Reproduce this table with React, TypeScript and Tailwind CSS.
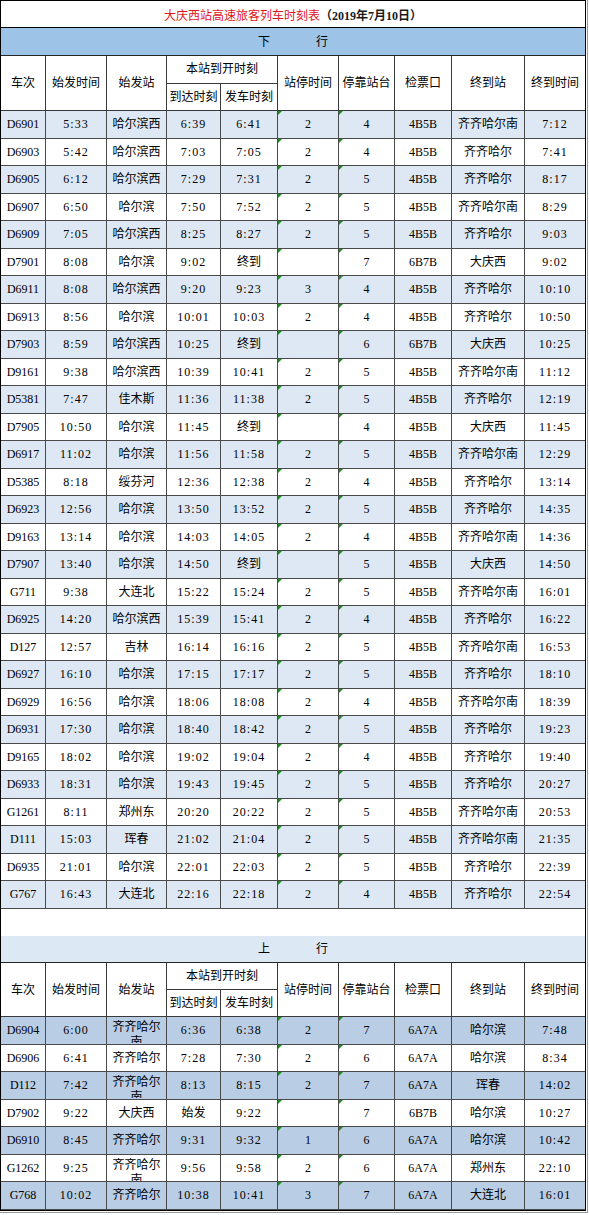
import React from "react";

type Row = string[];

// 下行
const downRows: Row[] = [
    ["D6901", "5:33", "哈尔滨西", "6:39", "6:41", "2", "4", "4B5B", "齐齐哈尔南", "7:12"],
    ["D6903", "5:42", "哈尔滨西", "7:03", "7:05", "2", "4", "4B5B", "齐齐哈尔", "7:41"],
    ["D6905", "6:12", "哈尔滨西", "7:29", "7:31", "2", "5", "4B5B", "齐齐哈尔", "8:17"],
    ["D6907", "6:50", "哈尔滨", "7:50", "7:52", "2", "5", "4B5B", "齐齐哈尔南", "8:29"],
    ["D6909", "7:05", "哈尔滨西", "8:25", "8:27", "2", "5", "4B5B", "齐齐哈尔", "9:03"],
    ["D7901", "8:08", "哈尔滨", "9:02", "终到", "", "7", "6B7B", "大庆西", "9:02"],
    ["D6911", "8:08", "哈尔滨西", "9:20", "9:23", "3", "4", "4B5B", "齐齐哈尔", "10:10"],
    ["D6913", "8:56", "哈尔滨", "10:01", "10:03", "2", "4", "4B5B", "齐齐哈尔", "10:50"],
    ["D7903", "8:59", "哈尔滨西", "10:25", "终到", "", "6", "6B7B", "大庆西", "10:25"],
    ["D9161", "9:38", "哈尔滨西", "10:39", "10:41", "2", "5", "4B5B", "齐齐哈尔南", "11:12"],
    ["D5381", "7:47", "佳木斯", "11:36", "11:38", "2", "5", "4B5B", "齐齐哈尔", "12:19"],
    ["D7905", "10:50", "哈尔滨", "11:45", "终到", "", "4", "4B5B", "大庆西", "11:45"],
    ["D6917", "11:02", "哈尔滨", "11:56", "11:58", "2", "5", "4B5B", "齐齐哈尔南", "12:29"],
    ["D5385", "8:18", "绥芬河", "12:36", "12:38", "2", "4", "4B5B", "齐齐哈尔", "13:14"],
    ["D6923", "12:56", "哈尔滨", "13:50", "13:52", "2", "5", "4B5B", "齐齐哈尔", "14:35"],
    ["D9163", "13:14", "哈尔滨", "14:03", "14:05", "2", "4", "4B5B", "齐齐哈尔南", "14:36"],
    ["D7907", "13:40", "哈尔滨", "14:50", "终到", "", "5", "4B5B", "大庆西", "14:50"],
    ["G711", "9:38", "大连北", "15:22", "15:24", "2", "5", "4B5B", "齐齐哈尔南", "16:01"],
    ["D6925", "14:20", "哈尔滨西", "15:39", "15:41", "2", "4", "4B5B", "齐齐哈尔", "16:22"],
    ["D127", "12:57", "吉林", "16:14", "16:16", "2", "5", "4B5B", "齐齐哈尔南", "16:53"],
    ["D6927", "16:10", "哈尔滨", "17:15", "17:17", "2", "5", "4B5B", "齐齐哈尔", "18:10"],
    ["D6929", "16:56", "哈尔滨", "18:06", "18:08", "2", "4", "4B5B", "齐齐哈尔南", "18:39"],
    ["D6931", "17:30", "哈尔滨", "18:40", "18:42", "2", "5", "4B5B", "齐齐哈尔", "19:23"],
    ["D9165", "18:02", "哈尔滨", "19:02", "19:04", "2", "4", "4B5B", "齐齐哈尔", "19:40"],
    ["D6933", "18:31", "哈尔滨", "19:43", "19:45", "2", "5", "4B5B", "齐齐哈尔", "20:27"],
    ["G1261", "8:11", "郑州东", "20:20", "20:22", "2", "5", "4B5B", "齐齐哈尔南", "20:53"],
    ["D111", "15:03", "珲春", "21:02", "21:04", "2", "5", "4B5B", "齐齐哈尔南", "21:35"],
    ["D6935", "21:01", "哈尔滨", "22:01", "22:03", "2", "5", "4B5B", "齐齐哈尔", "22:39"],
    ["G767", "16:43", "大连北", "22:16", "22:18", "2", "4", "4B5B", "齐齐哈尔", "22:54"],
];

// 上行
const upRows: Row[] = [
    ["D6904", "6:00", "齐齐哈尔南", "6:36", "6:38", "2", "7", "6A7A", "哈尔滨", "7:48"],
    ["D6906", "6:41", "齐齐哈尔", "7:28", "7:30", "2", "6", "6A7A", "哈尔滨", "8:34"],
    ["D112", "7:42", "齐齐哈尔南", "8:13", "8:15", "2", "7", "6A7A", "珲春", "14:02"],
    ["D7902", "9:22", "大庆西", "始发", "9:22", "", "7", "6B7B", "哈尔滨", "10:27"],
    ["D6910", "8:45", "齐齐哈尔", "9:31", "9:32", "1", "6", "6A7A", "哈尔滨", "10:42"],
    ["G1262", "9:25", "齐齐哈尔南", "9:56", "9:58", "2", "6", "6A7A", "郑州东", "22:10"],
    ["G768", "10:02", "齐齐哈尔", "10:38", "10:41", "3", "7", "6A7A", "大连北", "16:01"],
];

const cols = ["w-[45px]", "w-[61px]", "w-[60px]", "w-[54px]", "w-[57px]", "w-[61px]", "w-[56px]", "w-[57px]", "w-[73px]", "w-[60px]"];

function Mark() {
    return (
        <span className="absolute left-0 top-0 h-0 w-0 border-t-[4px] border-r-[4px] border-t-[#1f8a1f] border-r-transparent" />
    );
}

function DataRow({ row, shaded }: { row: Row; shaded: string }) {
    return (
        <tr className={shaded}>
            {row.map((text, i) => {
                const last = i === row.length - 1;
                const wraps = i === 2 && text.length > 4;
                return (
                    <td
                        key={i}
                        className={`relative h-[27.5px] p-0 text-center align-middle border-b border-[#4a4a4a] ${last ? "" : "border-r"}`}
                    >
                        {(i === 5 || i === 6) && <Mark />}
                        {wraps ? (
                            <div className="h-[26px] overflow-hidden pt-[3px] leading-[15px] break-all">{text}</div>
                        ) : (
                            <span className={`whitespace-nowrap ${text.includes(":") ? "tracking-[1px]" : ""}`}>{text}</span>
                        )}
                    </td>
                );
            })}
        </tr>
    );
}

function HeaderRows({ rowH }: { rowH: string }) {
    const side = `p-0 text-center align-middle border-b border-r border-[#3a3a3a]`;
    return (
        <>
            <tr>
                <td rowSpan={2} className={side}>车次</td>
                <td rowSpan={2} className={side}>始发时间</td>
                <td rowSpan={2} className={side}>始发站</td>
                <td colSpan={2} className={`${side} ${rowH}`}>本站到开时刻</td>
                <td rowSpan={2} className={side}>站停时间</td>
                <td rowSpan={2} className={side}>停靠站台</td>
                <td rowSpan={2} className={side}>检票口</td>
                <td rowSpan={2} className={side}>终到站</td>
                <td rowSpan={2} className="p-0 text-center align-middle border-b border-[#3a3a3a]">终到时间</td>
            </tr>
            <tr>
                <td className={`${side} ${rowH}`}>到达时刻</td>
                <td className={`${side} ${rowH}`}>发车时刻</td>
            </tr>
        </>
    );
}

function Band({ first, second, bg, h }: { first: string; second: string; bg: string; h: string }) {
    return (
        <tr>
            <td colSpan={10} className={`${bg} ${h} p-0 border-b border-[#262626]`}>
                <div className="flex justify-center gap-[46px]">
                    <span>{first}</span>
                    <span>{second}</span>
                </div>
            </td>
        </tr>
    );
}

export default function App() {
    return (
        <div className="w-[589px] min-h-[1215px] bg-white text-black text-[12px] font-['Liberation_Serif','Noto_Sans_CJK_SC',serif]">
            <div className="w-[588px] border-r border-b border-[#9a9a9a] pr-[1px] pb-[1px]">
                <div className="border border-black">
                    <table className="w-[584px] table-fixed border-separate border-spacing-0">
                        <colgroup>
                            {cols.map((c, i) => (
                                <col key={i} className={c} />
                            ))}
                        </colgroup>
                        <tbody>
                            <tr>
                                <td colSpan={10} className="h-[27px] p-0 pt-[3px] text-center align-middle border-b border-black text-[12px]">
                                    <span className="text-[#e0141e]">大庆西站高速旅客列车时刻表</span>
                                    <span className="font-bold text-[#1a1a1a]">（2019年7月10日）</span>
                                </td>
                            </tr>
                            <Band first="下" second="行" bg="bg-[#9dc3e6]" h="h-[28px]" />
                            <HeaderRows rowH="h-[27.5px]" />
                            {downRows.map((r, i) => (
                                <DataRow key={r[0]} row={r} shaded={i % 2 === 0 ? "bg-[#dde8f4]" : "bg-white"} />
                            ))}
                            <tr>
                                <td colSpan={10} className="h-[27px] p-0" />
                            </tr>
                            <Band first="上" second="行" bg="bg-[#dce8f4]" h="h-[27.5px]" />
                            <HeaderRows rowH="h-[27px]" />
                            {upRows.map((r, i) => (
                                <DataRow key={r[0]} row={r} shaded={i % 2 === 0 ? "bg-[#b9cde5]" : "bg-white"} />
                            ))}
                        </tbody>
                    </table>
                </div>
            </div>
        </div>
    );
}
